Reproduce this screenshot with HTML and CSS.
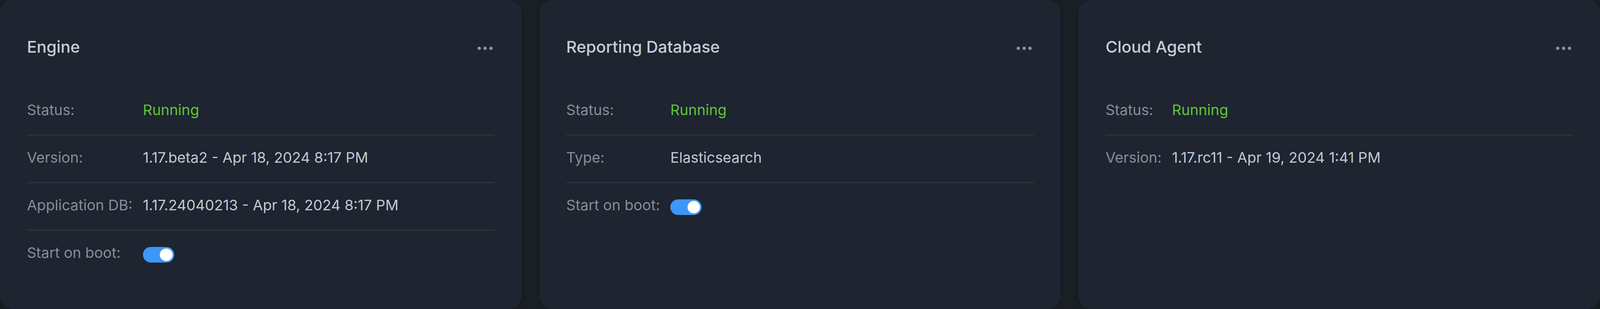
FILE: index.html
```html
<!DOCTYPE html>
<html lang="en">
<head>
<meta charset="utf-8">
<title>Services</title>
<link rel="stylesheet" href="styles.css">
</head>
<body>
<main class="cards">
  <section class="card">
    <header class="card-head">
      <h2 class="card-title">Engine</h2>
      <button class="menu-btn" aria-label="More">
        <svg viewBox="0 0 24 24" fill="none" stroke="currentColor" stroke-width="2" stroke-linecap="round" stroke-linejoin="round"><circle cx="12" cy="12" r="1"/><circle cx="19" cy="12" r="1"/><circle cx="5" cy="12" r="1"/></svg>
      </button>
    </header>
    <table class="props">
      <tr><td class="label">Status:</td><td class="value ok">Running</td></tr>
      <tr><td class="label">Version:</td><td class="value">1.17.beta2 - Apr 18, 2024 8:17 PM</td></tr>
      <tr><td class="label">Application DB:</td><td class="value">1.17.24040213 - Apr 18, 2024 8:17 PM</td></tr>
      <tr><td class="label">Start on boot:</td><td class="value"><span class="toggle on"><span class="knob"></span></span></td></tr>
    </table>
  </section>
  <section class="card">
    <header class="card-head">
      <h2 class="card-title">Reporting Database</h2>
      <button class="menu-btn" aria-label="More">
        <svg viewBox="0 0 24 24" fill="none" stroke="currentColor" stroke-width="2" stroke-linecap="round" stroke-linejoin="round"><circle cx="12" cy="12" r="1"/><circle cx="19" cy="12" r="1"/><circle cx="5" cy="12" r="1"/></svg>
      </button>
    </header>
    <table class="props">
      <tr><td class="label">Status:</td><td class="value ok">Running</td></tr>
      <tr><td class="label">Type:</td><td class="value">Elasticsearch</td></tr>
      <tr><td class="label">Start on boot:</td><td class="value"><span class="toggle on"><span class="knob"></span></span></td></tr>
    </table>
  </section>
  <section class="card">
    <header class="card-head">
      <h2 class="card-title">Cloud Agent</h2>
      <button class="menu-btn" aria-label="More">
        <svg viewBox="0 0 24 24" fill="none" stroke="currentColor" stroke-width="2" stroke-linecap="round" stroke-linejoin="round"><circle cx="12" cy="12" r="1"/><circle cx="19" cy="12" r="1"/><circle cx="5" cy="12" r="1"/></svg>
      </button>
    </header>
    <table class="props">
      <tr><td class="label">Status:</td><td class="value ok">Running</td></tr>
      <tr><td class="label">Version:</td><td class="value">1.17.rc11 - Apr 19, 2024 1:41 PM</td></tr>
    </table>
  </section>
</main>
</body>
</html>
```

FILE: styles.css
```css
:root {
  /* horizontal design unit: 1px at the 5708px-wide design width */
  --u: calc(100vw / 5708);
}

html {
  background: #1a1f26;
}

body {
  margin: 0;
  font-family: Inter, "Liberation Sans", sans-serif;
  color: #c3c9d2;
  background: #1a1f26;
}

.cards {
  display: grid;
  grid-template-columns: repeat(3, minmax(0, 1fr));
  gap: calc(64 * var(--u));
  height: 792px;
}

.card {
  background: #1e2430;
  border-radius: 32px;
  padding: 76px calc(96 * var(--u));
  box-sizing: border-box;
  box-shadow: 0 4px 12px rgba(0, 0, 0, 0.22);
  min-width: 0;
}

.card-head {
  display: flex;
  align-items: center;
  justify-content: space-between;
  height: 88px;
}

.card-title {
  margin: 0;
  font-size: calc(58 * var(--u));
  line-height: 88px;
  font-weight: 500;
  color: #c8cdd5;
  white-space: nowrap;
}

.menu-btn {
  display: flex;
  align-items: center;
  justify-content: center;
  padding: 0;
  margin: 8px calc(-2 * var(--u)) 0 0;
  border: 0;
  background: none;
  color: #8a939e;
}

.menu-btn svg {
  display: block;
  width: calc(72 * var(--u));
  height: calc(72 * var(--u));
}

.props {
  margin-top: 62px;
  width: 100%;
  border-collapse: collapse;
  font-size: calc(52 * var(--u));
  line-height: 80px;
}

.props td {
  padding: 16px 0 22px;
  border-bottom: 4px solid #2a313b;
  vertical-align: baseline;
  white-space: nowrap;
}

.props tr:last-child td {
  border-bottom: 0;
}

.props .label {
  width: 1%;
  padding-right: calc(37 * var(--u));
  color: #858e99;
}

.props .value {
  color: #c3c9d2;
}

.props .ok {
  color: #5fc736;
}

.toggle {
  display: inline-flex;
  align-items: center;
  justify-content: flex-end;
  box-sizing: border-box;
  width: calc(112 * var(--u));
  height: calc(56 * var(--u));
  padding: 0 calc(6 * var(--u));
  border-radius: calc(28 * var(--u));
  background: #3d97f6;
  vertical-align: middle;
  position: relative;
  top: 2px;
}

.toggle .knob {
  width: calc(45 * var(--u));
  height: calc(45 * var(--u));
  border-radius: 50%;
  background: #ffffff;
}
```
